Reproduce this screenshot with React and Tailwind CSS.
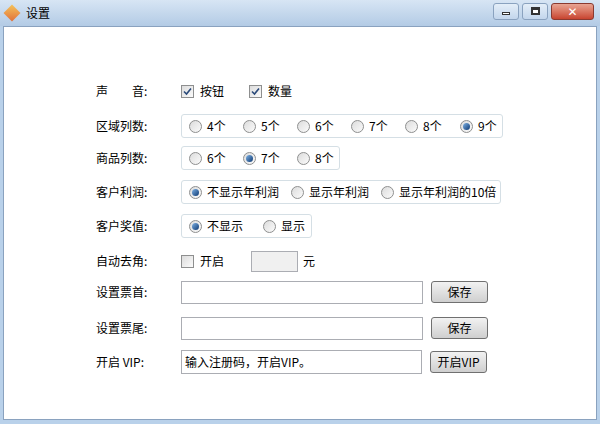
import React from "react";

const Radio = ({ on }) => (
  <span className="inline-flex items-center justify-center w-[13px] h-[13px] rounded-full border border-[#8e8f8f] bg-gradient-to-br from-[#dcdcdc] to-[#fbfbfb] mr-[5px]">
    {on && <span className="w-[7px] h-[7px] rounded-full bg-gradient-to-br from-[#7fb3e6] to-[#0d3a73]" />}
  </span>
);

const Check = ({ on }) => (
  <span className="inline-flex items-center justify-center w-[13px] h-[13px] border border-[#8e8f8f] bg-gradient-to-br from-[#dcdcdc] to-[#fbfbfb] mr-[6px]">
    {on && (
      <svg width="9" height="9" viewBox="0 0 9 9">
        <path d="M1 4.5 L3.5 7 L8 1.5" stroke="#2b4a7a" strokeWidth="1.6" fill="none" />
      </svg>
    )}
  </span>
);

const Group = ({ w, items, sel }) => (
  <div className="flex items-center h-[24px] border border-[#d5dfe5] rounded-[3px] pl-[7px]" style={{ width: w }}>
    {items.map(([t, x], i) => (
      <span key={i} className="flex items-center" style={{ width: x }}>
        <Radio on={i === sel} />
        {t}
      </span>
    ))}
  </div>
);

const Btn = ({ children }) => (
  <button className="ml-[8px] w-[57px] h-[22px] border border-[#707070] rounded-[3px] bg-gradient-to-b from-[#f2f2f2] to-[#cfcfcf] text-[12px]">
    {children}
  </button>
);

const Row = ({ label, mt, children }) => (
  <div className="flex items-center h-[24px]" style={{ marginTop: mt }}>
    <div className="w-[85px]">{label}</div>
    {children}
  </div>
);

export default function App() {
  return (
    <div className="w-[600px] h-[424px] bg-[#b9d1ea] flex flex-col text-[12px] text-black" style={{ fontFamily: '"Noto Sans CJK SC", "DejaVu Sans", sans-serif' }}>
      <div className="h-[26px] flex items-center bg-gradient-to-b from-[#d7e5f4] to-[#b3cbe5] px-[6px]">
        <span className="w-[12px] h-[12px] rotate-45 bg-gradient-to-br from-[#f3c25a] to-[#e0703a] mr-[8px]" />
        <span className="text-[12px]">设置</span>
        <div className="ml-auto flex gap-[3px] mt-[-4px]">
          <span className="w-[26px] h-[17px] border border-[#8aa2bf] rounded-[3px] bg-gradient-to-b from-[#e4eef8] to-[#c3d6ec] flex items-center justify-center"><span className="w-[8px] h-[3px] border border-[#333] bg-white mt-[4px]" /></span>
          <span className="w-[26px] h-[17px] border border-[#8aa2bf] rounded-[3px] bg-gradient-to-b from-[#e4eef8] to-[#c3d6ec] flex items-center justify-center"><span className="w-[9px] h-[8px] border-[2px] border-t-[3px] border-[#333] bg-white" /></span>
          <span className="w-[43px] h-[17px] border border-[#8a3a30] rounded-[3px] bg-gradient-to-b from-[#e8a493] to-[#c7432f] flex items-center justify-center text-white font-bold text-[12px] leading-none">✕</span>
        </div>
      </div>
      <div className="flex-1 mx-[3px] mb-[4px] bg-white border border-[#8aa2bf] pl-[92px] pt-[52px]">
        <Row label="声　　音:" mt={0}>
          <span className="flex items-center w-[68px]"><Check on />按钮</span>
          <span className="flex items-center"><Check on />数量</span>
        </Row>
        <Row label="区域列数:" mt={11}>
          <Group w={322} sel={5} items={[["4个", 54], ["5个", 54], ["6个", 54], ["7个", 54], ["8个", 55], ["9个", 40]]} />
        </Row>
        <Row label="商品列数:" mt={8}>
          <Group w={159} sel={1} items={[["6个", 54], ["7个", 54], ["8个", 40]]} />
        </Row>
        <Row label="客户利润:" mt={10}>
          <Group w={320} sel={0} items={[["不显示年利润", 102], ["显示年利润", 90], ["显示年利润的10倍", 118]]} />
        </Row>
        <Row label="客户奖值:" mt={10}>
          <Group w={131} sel={0} items={[["不显示", 74], ["显示", 44]]} />
        </Row>
        <Row label="自动去角:" mt={11}>
          <span className="flex items-center w-[70px]"><Check />开启</span>
          <span className="w-[47px] h-[21px] border border-[#abadb3] bg-[#f0f0f0] mr-[5px]" />
          元
        </Row>
        <Row label="设置票首:" mt={7}>
          <span className="w-[242px] h-[23px] border border-[#abadb3]" />
          <Btn>保存</Btn>
        </Row>
        <Row label="设置票尾:" mt={12}>
          <span className="w-[242px] h-[23px] border border-[#abadb3]" />
          <Btn>保存</Btn>
        </Row>
        <Row label="开启 VIP:" mt={10}>
          <span className="w-[241px] h-[24px] border border-[#abadb3] flex items-center pl-[3px]">输入注册码，开启VIP。</span>
          <Btn>开启VIP</Btn>
        </Row>
      </div>
    </div>
  );
}
